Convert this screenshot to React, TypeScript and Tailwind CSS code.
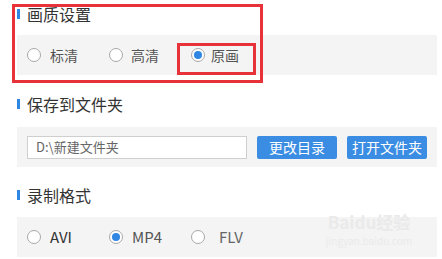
const font = { fontFamily: '"Noto Sans CJK SC", "Noto Sans", sans-serif' }

function Radio({ checked }: { checked?: boolean }) {
  return (
    <span className="flex h-[14px] w-[14px] shrink-0 items-center justify-center rounded-full border border-[#a8a8a8] bg-white">
      {checked && <span className="h-[8px] w-[8px] rounded-full bg-[#2f86e3]" />}
    </span>
  )
}

function Title({ text }: { text: string }) {
  return (
    <div className="flex h-[20px] items-center">
      <span className="h-[10px] w-[3px] bg-[#2f86e3]" />
      <span className="ml-[7px] text-[16px] leading-[20px] text-[#333]">{text}</span>
    </div>
  )
}

export default function App() {
  return (
    <div className="relative h-[259px] w-[442px] overflow-hidden bg-white" style={font}>
      <div className="pl-[17px]">
        <div className="mt-[4px]">
          <Title text="画质设置" />
        </div>
        <div className="mt-[11px] flex h-[40px] w-[420px] items-center bg-[#f4f4f4] pl-[10px]">
          <label className="flex w-[82px] items-center">
            <Radio />
            <span className="ml-[9px] text-[14px] text-[#555]">标清</span>
          </label>
          <label className="flex w-[82px] items-center">
            <Radio />
            <span className="ml-[8px] text-[14px] text-[#555]">高清</span>
          </label>
          <label className="flex w-[82px] items-center">
            <Radio checked />
            <span className="ml-[6px] text-[14px] text-[#555]">原画</span>
          </label>
        </div>

        <div className="mt-[19px]">
          <Title text="保存到文件夹" />
        </div>
        <div className="mt-[13px] flex h-[40px] w-[420px] items-center bg-[#f4f4f4] pl-[10px]">
          <div className="flex h-[23px] w-[220px] items-center border border-[#cfcfcf] bg-white pl-[8px] text-[13px] text-[#666]">
            D:\新建文件夹
          </div>
          <button className="ml-[10px] h-[23px] w-[80px] rounded-[2px] bg-[#3a8de2] text-[14px] leading-[23px] text-white">
            更改目录
          </button>
          <button className="ml-[10px] h-[23px] w-[80px] rounded-[2px] bg-[#3a8de2] text-[14px] leading-[23px] text-white">
            打开文件夹
          </button>
        </div>

        <div className="mt-[18px]">
          <Title text="录制格式" />
        </div>
        <div className="mt-[12px] flex h-[40px] w-[420px] items-center bg-[#f4f4f4] pl-[10px]">
          <label className="flex w-[82px] items-center">
            <Radio />
            <span className="ml-[9px] text-[15px] text-[#333]">AVI</span>
          </label>
          <label className="flex w-[82px] items-center">
            <Radio checked />
            <span className="ml-[9px] text-[15px] text-[#555]">MP4</span>
          </label>
          <label className="flex w-[82px] items-center">
            <Radio />
            <span className="ml-[14px] text-[15px] text-[#666]">FLV</span>
          </label>
        </div>
      </div>

      {/* watermark */}
      <div className="pointer-events-none absolute left-[324px] top-[212px] flex w-[90px] flex-col items-center text-[#eaeaea]">
        <span className="text-[17px] font-bold leading-[20px]">Baidu经验</span>
        <span className="mt-[3px] text-[10px] leading-[12px]">jingyan.baidu.com</span>
      </div>

      {/* annotation boxes */}
      <div className="pointer-events-none absolute left-[12px] top-[4px] h-[79px] w-[251px] border-[3px] border-[#e8323a]" />
      <div className="pointer-events-none absolute left-[177px] top-[43px] h-[32px] w-[79px] border-[3px] border-[#e8323a]" />
    </div>
  )
}
